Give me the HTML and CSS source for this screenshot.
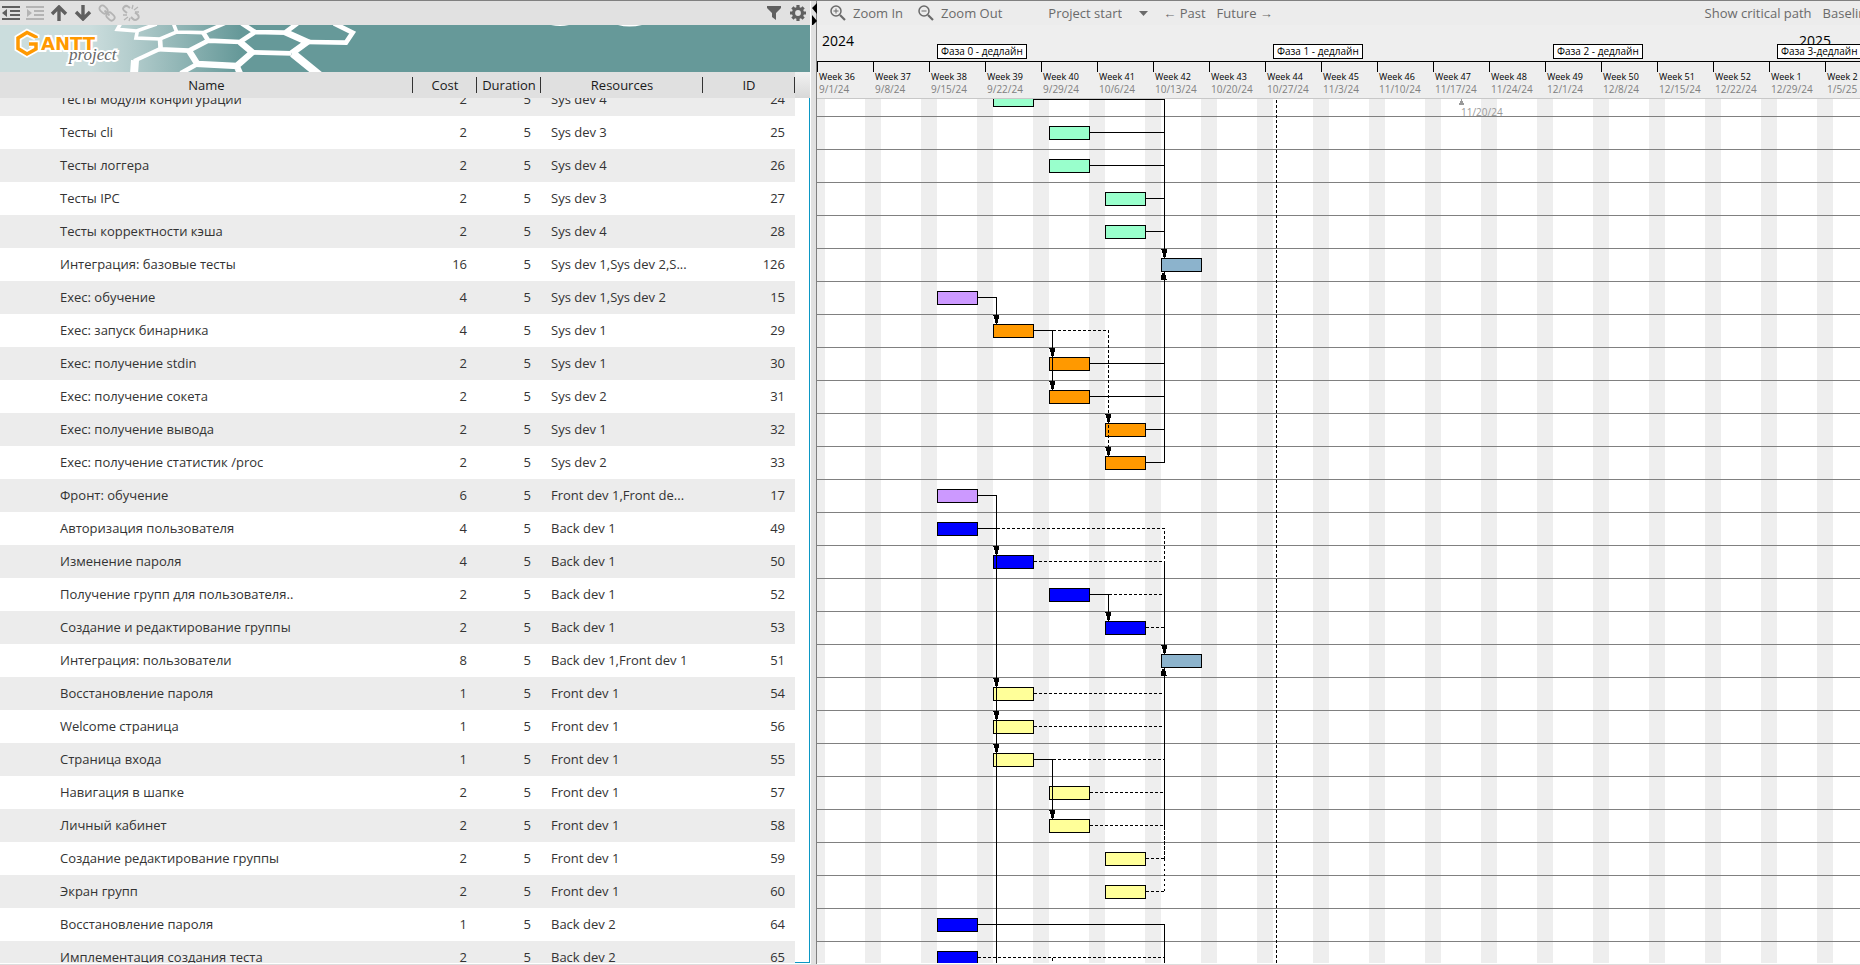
FILE: index.html
```html
<!DOCTYPE html>
<html lang="ru">
<head>
<meta charset="utf-8">
<title>GanttProject</title>
<link rel="stylesheet" href="styles.css">
</head>
<body>
<main class="app">
  <section class="tasks-pane">
    <div class="task-toolbar">
      <button class="icon-btn" aria-label="Unindent"><svg width="18" height="14" viewBox="0 0 18 14" fill="currentColor"><path d="M0 0h18v2H0zM8 4h10v2H8zM8 8h10v2H8zM0 12h18v2H0zM5 3v8L0 7z"/></svg></button>
      <button class="icon-btn disabled" disabled aria-label="Indent"><svg width="18" height="14" viewBox="0 0 18 14" fill="currentColor"><path d="M0 0h18v2H0zM8 4h10v2H8zM8 8h10v2H8zM0 12h18v2H0zM1 3v8l5-4z"/></svg></button>
      <button class="icon-btn" aria-label="Move up"><svg width="18" height="16" viewBox="0 0 18 16" fill="none" stroke="currentColor" stroke-width="3.4"><path d="M9 16V3M2 9l7-7 7 7"/></svg></button>
      <button class="icon-btn" aria-label="Move down"><svg width="18" height="16" viewBox="0 0 18 16" fill="none" stroke="currentColor" stroke-width="3.4"><path d="M9 0v13M2 7l7 7 7-7"/></svg></button>
      <button class="icon-btn disabled" disabled aria-label="Link"><svg width="18" height="18" viewBox="0 0 18 18" fill="none" stroke="currentColor" stroke-width="1.800"><rect x="1" y="2.500" width="9" height="6" rx="3" transform="rotate(45 5.500 5.500)"/><rect x="8" y="9.500" width="9" height="6" rx="3" transform="rotate(45 12.500 12.500)"/><path d="M6.500 6.500l5 5"/></svg></button>
      <button class="icon-btn disabled" disabled aria-label="Unlink"><svg width="18" height="18" viewBox="0 0 18 18" fill="none" stroke="currentColor" stroke-width="2"><path d="M8 4L6 2.500Q4 1 2 3T2.500 7L5 9M9 13l2 2q2 2 4.500 0t0-4.500l-2.500-2"/><path stroke-width="1.300" d="M10 5l1-4M12 6l4-3M13 8h4M1 11h4M2 16l4-3M7 17l1-3"/></svg></button>
      <span class="spacer"></span>
      <button class="icon-btn" aria-label="Filter"><svg width="14" height="14" viewBox="0 0 14 14" fill="currentColor"><path d="M0 0h14v2L9 7v7l-4-3V7L0 2z"/></svg></button>
      <button class="icon-btn" aria-label="Settings"><svg width="16" height="16" viewBox="0 0 16 16" fill="none" stroke="currentColor"><circle cx="8" cy="8" r="4.500" stroke-width="3.200"/><g stroke-width="3.200"><path d="M8 0v3M8 13v3M0 8h3M13 8h3M2.400 2.400l2 2M11.600 11.600l2 2M2.400 13.600l2-2M11.600 4.400l2-2"/></g></svg></button>
    </div>
    <div class="banner">
      <svg width="100%" height="47" role="img" aria-label="GanttProject">
        <g transform="translate(110 -5) scale(.3333)" fill="none" stroke="#fff" stroke-width="14">
          <path stroke-width="11" d="M32 10L22 28L80 33L140 12M82 33L78 54L150 57L200 36L190 10M200 36L280 38L345 10"/>
          <path d="M150 57L152 88L237 92L295 62L280 38M295 62L390 66L435 36L395 10M435 36L525 38L562 10"/>
          <path stroke-width="19" d="M390 66L427 97L380 138L262 132L237 92M545 100L592 66L525 36M380 138L392 165"/>
          <path d="M262 132L212 160M427 97L545 100M592 66L708 68L728 38L672 10"/>
          <path stroke-width="24" d="M548 100L628 165M72 162L75 121"/>
          <path stroke-width="12" d="M72 123L152 86"/>
        </g>
        <path d="M551 0q9 2 18 0zM618 0q11 3 24 0z" fill="#fff"/>
        <text class="logo-main" x="41" y="25">ANTT</text>
        <text class="logo-sub" x="69" y="35">project</text>
        <path d="M36 13V12L27 7.500L18 13V23.500L27 29L36 24V19H29" stroke="#fff" stroke-width="7" fill="none"/>
        <path d="M36 13V12L27 7.500L18 13V23.500L27 29L36 24V19H29" stroke="#f90" stroke-width="3.500" fill="none"/>
      </svg>
    </div>
    <div class="task-scroll" data-scroll="15">
      <table class="task-table">
        <colgroup><col class="c-name"><col class="c-cost"><col class="c-dur"><col class="c-res"><col class="c-id"><col></colgroup>
        <thead><tr><th>Name</th><th>Cost</th><th>Duration</th><th>Resources</th><th>ID</th><th class="filler"></th></tr></thead>
        <tbody>
          <tr><td>Тесты модуля конфигурации</td><td>2</td><td>5</td><td>Sys dev 4</td><td>24</td></tr>
          <tr><td>Тесты cli</td><td>2</td><td>5</td><td>Sys dev 3</td><td>25</td></tr>
          <tr><td>Тесты логгера</td><td>2</td><td>5</td><td>Sys dev 4</td><td>26</td></tr>
          <tr><td>Тесты IPC</td><td>2</td><td>5</td><td>Sys dev 3</td><td>27</td></tr>
          <tr><td>Тесты корректности кэша</td><td>2</td><td>5</td><td>Sys dev 4</td><td>28</td></tr>
          <tr><td>Интеграция: базовые тесты</td><td>16</td><td>5</td><td>Sys dev 1,Sys dev 2,S...</td><td>126</td></tr>
          <tr><td>Exec: обучение</td><td>4</td><td>5</td><td>Sys dev 1,Sys dev 2</td><td>15</td></tr>
          <tr><td>Exec: запуск бинарника</td><td>4</td><td>5</td><td>Sys dev 1</td><td>29</td></tr>
          <tr><td>Exec: получение stdin</td><td>2</td><td>5</td><td>Sys dev 1</td><td>30</td></tr>
          <tr><td>Exec: получение сокета</td><td>2</td><td>5</td><td>Sys dev 2</td><td>31</td></tr>
          <tr><td>Exec: получение вывода</td><td>2</td><td>5</td><td>Sys dev 1</td><td>32</td></tr>
          <tr><td>Exec: получение статистик /proc</td><td>2</td><td>5</td><td>Sys dev 2</td><td>33</td></tr>
          <tr><td>Фронт: обучение</td><td>6</td><td>5</td><td>Front dev 1,Front de...</td><td>17</td></tr>
          <tr><td>Авторизация пользователя</td><td>4</td><td>5</td><td>Back dev 1</td><td>49</td></tr>
          <tr><td>Изменение пароля</td><td>4</td><td>5</td><td>Back dev 1</td><td>50</td></tr>
          <tr><td>Получение групп для пользователя..</td><td>2</td><td>5</td><td>Back dev 1</td><td>52</td></tr>
          <tr><td>Создание и редактирование группы</td><td>2</td><td>5</td><td>Back dev 1</td><td>53</td></tr>
          <tr><td>Интеграция: пользователи</td><td>8</td><td>5</td><td>Back dev 1,Front dev 1</td><td>51</td></tr>
          <tr><td>Восстановление пароля</td><td>1</td><td>5</td><td>Front dev 1</td><td>54</td></tr>
          <tr><td>Welcome страница</td><td>1</td><td>5</td><td>Front dev 1</td><td>56</td></tr>
          <tr><td>Страница входа</td><td>1</td><td>5</td><td>Front dev 1</td><td>55</td></tr>
          <tr><td>Навигация в шапке</td><td>2</td><td>5</td><td>Front dev 1</td><td>57</td></tr>
          <tr><td>Личный кабинет</td><td>2</td><td>5</td><td>Front dev 1</td><td>58</td></tr>
          <tr><td>Создание редактирование группы</td><td>2</td><td>5</td><td>Front dev 1</td><td>59</td></tr>
          <tr><td>Экран групп</td><td>2</td><td>5</td><td>Front dev 1</td><td>60</td></tr>
          <tr><td>Восстановление пароля</td><td>1</td><td>5</td><td>Back dev 2</td><td>64</td></tr>
          <tr><td>Имплементация создания теста</td><td>2</td><td>5</td><td>Back dev 2</td><td>65</td></tr>
        </tbody>
      </table>
    </div>
  </section>
  <div class="splitter">
    <svg width="5" height="24" viewBox="0 0 5 24"><path d="M5 2v11L0 7zM0 14v11l5-5z"/></svg>
  </div>
  <section class="chart-pane">
    <div class="chart-toolbar">
      <button class="text-btn zoom"><svg width="16" height="16" viewBox="0 0 16 16" fill="none" stroke="currentColor"><circle cx="6" cy="6" r="5" stroke-width="1.500"/><path stroke-width="2.200" d="M10 10l5 5"/><path d="M6 3.500v5M3.500 6h5"/></svg>Zoom In</button>
      <button class="text-btn zoom"><svg width="16" height="16" viewBox="0 0 16 16" fill="none" stroke="currentColor"><circle cx="6" cy="6" r="5" stroke-width="1.500"/><path stroke-width="2.200" d="M10 10l5 5"/><path d="M3.500 6h5"/></svg>Zoom Out</button>
      <label class="picker"><select class="picker-select" aria-label="Scroll to"><option>Project start</option></select><svg width="9" height="5" viewBox="0 0 9 5"><path d="M0 0h9L4.500 5z" fill="currentColor"/></svg></label>
      <button class="text-btn past">← Past</button>
      <button class="text-btn">Future →</button>
      <div class="chart-actions">
        <button class="text-btn">Show critical path</button>
        <button class="text-btn">Baselines...</button>
      </div>
    </div>
    <div class="timeline">
      <div class="years"><span class="year y2024">2024</span><span class="year y2025">2025</span></div>
      <div class="weeks">
        <div class="week">Week 36<small>9/1/24</small></div><div class="week">Week 37<small>9/8/24</small></div><div class="week">Week 38<small>9/15/24</small></div><div class="week">Week 39<small>9/22/24</small></div><div class="week">Week 40<small>9/29/24</small></div><div class="week">Week 41<small>10/6/24</small></div><div class="week">Week 42<small>10/13/24</small></div><div class="week">Week 43<small>10/20/24</small></div><div class="week">Week 44<small>10/27/24</small></div><div class="week">Week 45<small>11/3/24</small></div><div class="week">Week 46<small>11/10/24</small></div><div class="week">Week 47<small>11/17/24</small></div><div class="week">Week 48<small>11/24/24</small></div><div class="week">Week 49<small>12/1/24</small></div><div class="week">Week 50<small>12/8/24</small></div><div class="week">Week 51<small>12/15/24</small></div><div class="week">Week 52<small>12/22/24</small></div><div class="week">Week 1<small>12/29/24</small></div><div class="week">Week 2<small>1/5/25</small></div>
      </div>
      <span class="milestone m0">Фаза 0 - дедлайн</span>
      <span class="milestone m1">Фаза 1 - дедлайн</span>
      <span class="milestone m2">Фаза 2 - дедлайн</span>
      <span class="milestone m3">Фаза 3-дедлайн</span>
    </div>
    <div class="chart-body">
      <div class="chart-scroll" data-scroll="16">
        <svg class="chart" width="100%" height="891" shape-rendering="crispEdges">
          <defs>
            <pattern id="weekend" width="56" height="33" patternUnits="userSpaceOnUse"><path d="M0 0h8v33H0zM48 0h8v33h-8z" fill="#eee"/></pattern>
            <pattern id="rowline" width="56" height="33" patternUnits="userSpaceOnUse"><path d="M0 0h56v1H0z" fill="#808080"/></pattern>
            <path id="down" d="M-3 0h6v4h-1v4h-3v-4h-1v-3h-1z"/>
            <path id="up" d="M-3 0h6v-1h-1v-4h-1v-2h-3v2h-1v4h-1z"/>
            <rect id="bar" width="40" height="13" stroke="#000"/>
          </defs>
          <rect width="100%" height="891" fill="url(#weekend)"/>
          <rect width="100%" height="891" fill="url(#rowline)"/>
          <g transform="translate(.5 .5)">
            <g fill="#9fc">
              <use href="#bar" x="176" y="10"/><use href="#bar" x="232" y="43"/><use href="#bar" x="232" y="76"/><use href="#bar" x="288" y="109"/><use href="#bar" x="288" y="142"/>
            </g>
            <g fill="#8cb3cc"><use href="#bar" x="344" y="175"/><use href="#bar" x="344" y="571"/></g>
            <g fill="#c9f"><use href="#bar" x="120" y="208"/><use href="#bar" x="120" y="406"/></g>
            <g fill="#f90"><use href="#bar" x="176" y="241"/><use href="#bar" x="232" y="274"/><use href="#bar" x="232" y="307"/><use href="#bar" x="288" y="340"/><use href="#bar" x="288" y="373"/></g>
            <g fill="#00f"><use href="#bar" x="120" y="439"/><use href="#bar" x="176" y="472"/><use href="#bar" x="232" y="505"/><use href="#bar" x="288" y="538"/><use href="#bar" x="120" y="835"/><use href="#bar" x="120" y="868"/></g>
            <g fill="#ff9"><use href="#bar" x="176" y="604"/><use href="#bar" x="176" y="637"/><use href="#bar" x="176" y="670"/><use href="#bar" x="232" y="703"/><use href="#bar" x="232" y="736"/><use href="#bar" x="288" y="769"/><use href="#bar" x="288" y="802"/></g>
            <g fill="none" stroke="#000">
              <path d="M216 16H347V175M272 49H347M272 82H347M328 115H347M328 148H347"/>
              <path d="M160 214H179V241M216 247H235V307M272 280H347M272 313H347M328 346H347M328 379H347V188"/>
              <path d="M160 412H179V891M160 445H179M347 478V571M272 511H291V538M347 584V742M216 676H235V736M160 841H347V891"/>
              <path stroke-dasharray="3 2" d="M235 247H291V373M179 445H347V478M216 478H347M291 511H347M328 544H347M216 610H347M216 643H347M235 676H347M272 709H347M272 742H347M328 775H347M328 808H347M160 874H347M235 874V891M459 16V891"/>
              <path stroke-dasharray="4 1" d="M347 742V775"/>
              <path stroke-dasharray="2 3" d="M347 775V808"/>
            </g>
          </g>
          <use href="#down" x="347" y="166"/><use href="#down" x="179" y="232"/><use href="#down" x="235" y="265"/><use href="#down" x="235" y="298"/><use href="#down" x="291" y="331"/><use href="#down" x="291" y="364"/>
          <use href="#down" x="179" y="463"/><use href="#down" x="291" y="529"/><use href="#down" x="347" y="562"/><use href="#down" x="179" y="595"/><use href="#down" x="179" y="628"/><use href="#down" x="179" y="661"/><use href="#down" x="235" y="727"/>
          <use href="#up" x="347" y="197"/><use href="#up" x="347" y="593"/>
          <path d="M644 16h1v2h1v2h1v2h-5v-2h1v-2h1z" fill="#999"/>
          <text class="marker-date" x="644" y="33">11/20/24</text>
        </svg>
      </div>
    </div>
  </section>
</main>
<script>
document.querySelectorAll('[data-scroll]').forEach(function (pane) { pane.scrollTop = Number(pane.dataset.scroll); });
</script>
</body>
</html>
```
FILE: styles.css
```css
* { box-sizing: border-box; }
body {
  margin: 0;
  background: #fff;
  color: #333;
  font-family: "Open Sans", "Noto Sans", sans-serif;
  font-size: 13px;
}
button, select {
  margin: 0;
  padding: 0;
  border: 0;
  background: none;
  font: inherit;
  color: inherit;
}
.app {
  display: flex;
  height: 100vh;
  overflow: hidden;
  border-top: 1px solid #808080;
  border-bottom: 1px solid #ddd;
}
.tasks-pane {
  flex: none;
  display: flex;
  flex-direction: column;
  width: 810px;
}
.task-toolbar {
  display: flex;
  align-items: center;
  gap: 6px;
  height: 24px;
  flex: none;
  padding: 0 4px 0 2px;
  background: #e1e1e1;
  color: #606060;
}
.icon-btn { display: flex; }
.icon-btn.disabled { color: #b4b4b4; }
.spacer { flex: 1; }
.task-toolbar .spacer ~ .icon-btn { margin-left: 3px; }
.banner {
  height: 47px;
  flex: none;
  background: linear-gradient(to right, #cbdddd 90px, #b4cdcd 130px, #669999 240px);
}
.banner svg { display: block; }
.logo-main {
  font: bold 18px "DejaVu Sans", sans-serif;
  fill: #f90;
  stroke: #fff;
  stroke-width: 4px;
  paint-order: stroke;
}
.logo-sub {
  font: italic 17px "Liberation Serif", serif;
  fill: #666;
  stroke: #fff;
  stroke-width: 4px;
  paint-order: stroke;
}
.task-scroll {
  flex: 1;
  min-height: 0;
  overflow: hidden;
  border-bottom: 1px solid #fff;
  box-shadow: inset -1px -1px #0b97c4;
}
.task-table {
  width: 100%;
  table-layout: fixed;
  border-collapse: separate;
  border-spacing: 0;
  line-height: 20px;
}
.c-name { width: 413px; }
.c-cost { width: 64px; }
.c-dur { width: 64px; }
.c-res { width: 162px; }
.c-id { width: 92px; }
.task-table th {
  position: sticky;
  top: 0;
  height: 26px;
  padding: 0;
  background: linear-gradient(#333, #333) right center / 1px 16px no-repeat #e0e0e0;
  color: #1a1a1a;
  font-weight: normal;
}
.task-table th.filler { background: linear-gradient(#f2f2f2, #d8d8d8); }
.task-table td {
  height: 33px;
  padding: 0 10px 2px;
  white-space: nowrap;
}
.task-table td:nth-child(1) { padding-left: 60px; }
.task-table td:nth-child(2), .task-table td:nth-child(3), .task-table td:nth-child(5) { text-align: right; }
.task-table tr:nth-child(odd) td { background: #ececec; }
.splitter {
  flex: none;
  width: 7px;
  padding-left: 1px;
  background: #e1e1e1;
  border-left: 1px solid #fff;
  border-right: 1px solid #808080;
}
.splitter svg { display: block; }
.chart-pane {
  flex: 1;
  min-width: 0;
  display: flex;
  flex-direction: column;
  overflow: hidden;
}
.chart-toolbar {
  display: flex;
  align-items: center;
  height: 24px;
  flex: none;
  padding-left: 13px;
  background: #ececec;
  color: #6a6a6a;
  white-space: nowrap;
}
.text-btn {
  flex: none;
  margin-right: 11px;
  line-height: 20px;
}
.zoom {
  display: flex;
  align-items: center;
  gap: 7px;
  margin-right: 15px;
}
.picker {
  display: flex;
  align-items: center;
  gap: 17px;
  margin: 0 15px 0 31px;
}
.picker-select { appearance: none; }
.chart-actions {
  display: flex;
  margin-left: auto;
  margin-right: -41px;
}
.timeline {
  position: relative;
  height: 74px;
  flex: none;
  overflow: hidden;
  background: #eee;
  border-bottom: 1px solid #c8c8c8;
  color: #000;
}
.years {
  height: 36px;
  position: relative;
  font-size: 14px;
  line-height: 16px;
}
.year { position: absolute; top: 8px; }
.y2024 { left: 5px; }
.y2025 { left: 982px; }
.weeks {
  display: flex;
  border-top: 1px solid #000;
  font-size: 9px;
}
.week {
  flex: none;
  width: 56px;
  padding: 8px 0 0 2px;
  line-height: 13px;
  background: linear-gradient(#000, #000) 0 0 / 1px 10px no-repeat;
}
.week small {
  display: block;
  color: #808080;
  font-size: 10px;
}
.milestone {
  position: absolute;
  top: 19px;
  padding: 0 3px;
  border: 1px solid #000;
  background: #fff;
  font-size: 10px;
  line-height: 13px;
  white-space: nowrap;
}
.m0 { left: 120px; }
.m1 { left: 456px; }
.m2 { left: 736px; }
.m3 { left: 960px; }
.chart-body {
  flex: 1;
  min-height: 0;
  display: flex;
  border-bottom: 1px solid #fff;
}
.chart-scroll {
  flex: 1;
  overflow: hidden;
}
.chart { display: block; }
.marker-date {
  font-size: 10px;
  fill: #999;
}
```
